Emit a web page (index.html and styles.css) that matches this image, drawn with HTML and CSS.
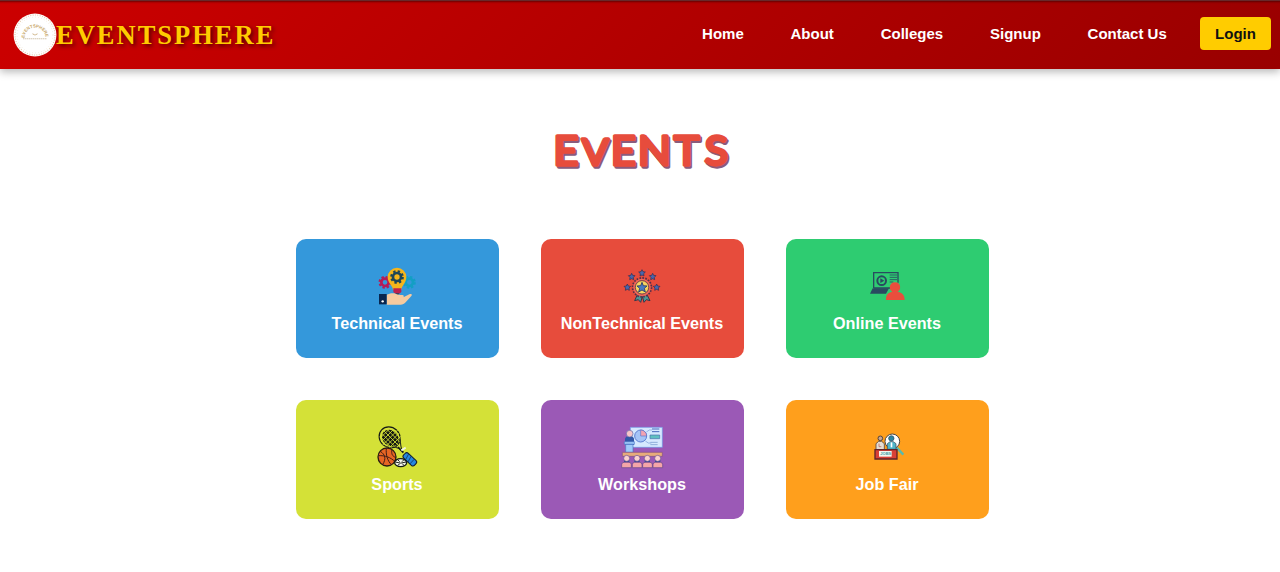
FILE: index.html
```html
<!DOCTYPE html>
<html lang="en">
<head>
<meta charset="utf-8">
<title>EventSphere</title>
<link rel="stylesheet" href="styles.css">
</head>
<body>
<header class="header">
  <div class="brand">
    <svg class="logo" viewBox="0 0 44 44">
      <defs><path id="arc" d="M11.5 25A10.5 10.5 0 0 1 32.5 25"/></defs>
      <circle cx="22" cy="22" r="21.4" fill="#fff"/>
      <circle cx="22" cy="22" r="20" fill="none" stroke="#e3ccb0" stroke-width="1.2" stroke-dasharray="1 1.4"/>
      <circle cx="22" cy="22" r="17.9" fill="none" stroke="#efe2d2" stroke-width=".8" stroke-dasharray=".8 2.2"/>
      <text class="logo-arc"><textPath href="#arc" textLength="32">EVENTSPHERE</textPath></text>
      <path d="M19.5 20.8l2 1h1l2-1" fill="none" stroke="#c9ac7b" stroke-width=".9"/>
      <path d="M10 25.8H34" stroke="#d3c6b0" stroke-width="1.1" stroke-dasharray="1.5 .5"/>
    </svg>
    <span class="brand-name">EVENTSPHERE</span>
  </div>
  <nav class="nav">
    <a>Home</a><a>About</a><a>Colleges</a><a>Signup</a><a>Contact Us</a>
    <a class="login">Login</a>
  </nav>
</header>
<main class="main">
  <h1 class="title">
    <svg class="title-art" viewBox="0 0 190 66">
      <g class="title-shadow" transform="translate(1.5 1.6) scale(1.06 1)"><text y="46.5" x="7.7 35 62 87.5 121.5 150.5">E<tspan class="title-v">V</tspan>ENTS</text></g>
      <g class="title-text" transform="scale(1.06 1)"><text y="46.5" x="7.7 35 62 87.5 121.5 150.5">E<tspan class="title-v">V</tspan>ENTS</text></g>
    </svg>
  </h1>
  <section class="cards">
    <article class="card blue">
      <svg class="icon" viewBox="0 0 162 150">
        <g fill="none" stroke="#b51c57"><circle cx="45" cy="67" r="11" stroke-width="8"/><circle cx="45" cy="67" r="16" stroke-width="7" stroke-dasharray="7 5.57"/></g>
        <g fill="none" stroke="#139fc4"><circle cx="118" cy="67" r="11" stroke-width="8"/><circle cx="118" cy="67" r="16" stroke-width="7" stroke-dasharray="7 5.57"/></g>
        <path d="M69 90c0-13-16-20-16-39a28 28 0 0 1 56 0c0 19-15 26-15 39z" fill="#f5b51b"/>
        <g fill="none" stroke="#1d4658"><circle cx="81" cy="51" r="12" stroke-width="8"/><circle cx="81" cy="51" r="17" stroke-width="7" stroke-dasharray="7 6.35"/></g>
        <path d="M70 85h24v11l-6 5H76l-6-5z" fill="#bd204f"/><path d="M75 100h13l-4 6h-5z" fill="#243c58"/>
        <path d="M50 104l13-4c16-2 15 5 34 5 7 1 5 8-1 9l22-11c6-3 10 0 6 5l-17 19c-4 5-9 7-15 7H50z" fill="#f6ca9f"/>
        <path d="M27 102h23v31H27z" fill="#08264f"/><circle cx="38" cy="124" r="3.5" fill="#fff"/>
      </svg>
      <h2>Technical Events</h2>
    </article>
    <article class="card red">
      <svg class="icon" viewBox="0 0 162 150">
        <defs><path id="star" d="M0-10l3 6 7 1-5 5 1 7-6-3-6 3 1-7-5-5 7-1z"/></defs>
        <g fill="#4767ae" stroke="#302b50" stroke-width="2"><use href="#star" x="81" y="39"/><use href="#star" x="50" y="50"/><use href="#star" x="113" y="50"/><use href="#star" x="37" y="82"/><use href="#star" x="125" y="82"/></g>
        <path d="M68 102l-9 20 11-3 7 8 5-18 5 18 7-8 11 3-10-20z" fill="#4c9696" stroke="#35354a" stroke-width="3"/>
        <circle cx="81" cy="82" r="27" fill="#e94b43"/>
        <circle cx="81" cy="82" r="28" fill="none" stroke="#55304a" stroke-width="6" stroke-dasharray="5 3.8"/>
        <circle cx="81" cy="82" r="24" fill="none" stroke="#ed6b5d" stroke-width="4"/>
        <circle cx="81" cy="82" r="20" fill="#f8d45f" stroke="#58404d" stroke-width="2.5"/>
        <path d="M81 67l4 10 11 1-8 7 3 11-10-6-10 6 3-11-8-7 11-1z" fill="#497bc2" stroke="#273963" stroke-width="2.5"/>
      </svg>
      <h2>NonTechnical Events</h2>
    </article>
    <article class="card green">
      <svg class="icon" viewBox="0 0 162 150">
        <path d="M41 84V38h73v30M92 84H41" fill="none" stroke="#294b60" stroke-width="4"/>
        <circle cx="65" cy="62" r="13" fill="none" stroke="#294b60" stroke-width="6"/><path d="M61 55l12 7-12 7z" fill="#294b60"/>
        <path d="M89 45h22M89 52h22M89 59h22M89 66h11" stroke="#294b60" stroke-width="2.5"/>
        <path d="M38 85h49l-9 16H30z" fill="#294b60"/>
        <path d="M78 120c0-15 5-22 19-25-11-5-11-28 8-28s19 23 8 28c14 3 21 10 21 25z" fill="#e94e3d"/>
      </svg>
      <h2>Online Events</h2>
    </article>
    <article class="card lime">
      <svg class="icon" viewBox="0 0 162 150">
        <path d="M84 78L100 95" stroke="#161b16" stroke-width="5"/>
        <ellipse cx="59" cy="49" rx="33" ry="30" transform="rotate(43 59 49)" fill="none" stroke="#161b16" stroke-width="3.5"/>
        <ellipse cx="61" cy="51" rx="27" ry="23" transform="rotate(43 61 51)" fill="#141812"/>
        <path d="M32 50L58 24M34 62L72 24M38 72L86 24M48 76L90 34M58 80L92 46M30 46L64 80M36 38L78 80M42 30L88 76M52 26L90 64M64 24L92 52" stroke="#d4e137" stroke-width="2.6"/>
        <path d="M90 56c3 13 1 26 9 36M68 78c13 1 23 5 29 14" fill="none" stroke="#161b16" stroke-width="3"/>
        <g transform="rotate(43 117 114)"><rect x="97" y="103" width="45" height="20" rx="7" fill="#2587df" stroke="#101d30" stroke-width="3"/><path d="M106 104l5 19M116 104l5 19M129 104v19" stroke="#173b67" stroke-width="2.5"/></g>
        <path d="M94 88l13-8" stroke="#f1f4df" stroke-width="6"/>
        <circle cx="51" cy="108" r="27" fill="#e76524" stroke="#2c1b12" stroke-width="4"/>
        <path d="M25 104c20-1 37 5 50 18M49 82c-2 18 3 37 15 49M31 91c15 10 18 22 7 40M66 86c-3 12 1 20 12 24" fill="none" stroke="#401e17" stroke-width="3"/>
        <ellipse cx="92" cy="125" rx="18" ry="12" fill="#f5f6ec" stroke="#151a17" stroke-width="4"/><path d="M76 123q16 7 32 0M84 117l5 5M101 117l-5 5M83 133l6-4M97 129l5 4" stroke="#20251e" stroke-width="3" fill="none"/>
      </svg>
      <h2>Sports</h2>
    </article>
    <article class="card purple">
      <svg class="icon" viewBox="0 2 162 150">
        <path d="M46 21h96v60H46z" fill="#d6e9ff" stroke="#6d95e6" stroke-width="2"/>
        <circle cx="77" cy="47" r="18" fill="#a5c4f6" stroke="#5d7ed2" stroke-width="3"/><path d="M77 47V29a18 18 0 0 1 18 18z" fill="#f4a3b1" stroke="#6272c9" stroke-width="2"/>
        <path d="M94 35l9-6h8M91 62l9 6h9" fill="none" stroke="#7598d6" stroke-width="2"/><path d="M111 26h22M111 34h22" stroke="#4768bd" stroke-width="3"/><path d="M105 44h29v11h-29z" fill="#5fbfc0" stroke="#486fae" stroke-width="2"/><path d="M106 66h22M106 73h22" stroke="#8dacd9" stroke-width="3"/>
        <path d="M30 70V54l7-8h13l7 8v20H30z" fill="#3158a8"/><circle cx="44" cy="40" r="10" fill="#f8c5c8" stroke="#5c68a9" stroke-width="2"/>
        <path d="M28 64h30v8H28zM32 72h22v24H32z" fill="#a0cafa" stroke="#4c77c4" stroke-width="2"/>
        <path d="M22 96h120v12H22z" fill="#e7ab7b" stroke="#845280" stroke-width="2"/>
        <g fill="#35509a"><path d="M27 118h16v8H27zM58 118h16v8H58zM89 118h16v8H89zM120 118h16v8h-16z"/></g>
        <g fill="#f5a5a8" stroke="#604389" stroke-width="2"><path d="M20 142v-9q0-7 7-7h15q7 0 7 7v9zM52 142v-9q0-7 7-7h15q7 0 7 7v9zM83 142v-9q0-7 7-7h15q7 0 7 7v9zM114 142v-9q0-7 7-7h15q7 0 7 7v9z"/></g>
        <g fill="#fbd2cf" stroke="#6a4d90" stroke-width="2"><circle cx="35" cy="114" r="9"/><circle cx="66" cy="114" r="9"/><circle cx="97" cy="114" r="9"/><circle cx="128" cy="114" r="9"/></g>
      </svg>
      <h2>Workshops</h2>
    </article>
    <article class="card orange">
      <svg class="icon" viewBox="0 2 162 150">
        <path d="M110 82l20 21" stroke="#58b9af" stroke-width="7"/><circle cx="97" cy="63" r="22" fill="#fff" stroke="#454448" stroke-width="3"/>
        <path d="M82 87V70l8-6h10l8 6v17z" fill="#4fb5c9" stroke="#284457" stroke-width="2"/><circle cx="94" cy="54" r="8" fill="#2c86a0" stroke="#284457" stroke-width="2"/><path d="M92 66h5v15h-5z" fill="#fff"/>
        <path d="M48 88V70l8-7h9l8 7v18z" fill="#e5ddd2" stroke="#54463e" stroke-width="2.5"/><circle cx="61" cy="54" r="7" fill="#c9a58f" stroke="#54443d" stroke-width="3"/><path d="M57 70v9h7" fill="none" stroke="#b4554e" stroke-width="2"/>
        <path d="M45 88h66v28H45z" fill="#d94036" stroke="#5d2529" stroke-width="4"/><path d="M57 92h38v17H57z" fill="#f4f7ef"/><text x="61" y="105" class="jobs">JOBS</text>
      </svg>
      <h2>Job Fair</h2>
    </article>
  </section>
</main>
</body>
</html>
```

FILE: styles.css
```css
* { box-sizing: border-box; }
body { margin: 0; background: #fff; font-family: "Liberation Sans", Arial, sans-serif; }
.header { height: 69px; display: flex; align-items: center; justify-content: space-between; padding: 0 9px 2px 13px; background: linear-gradient(135deg, #c00, #900); border-top: 1px solid #67292b; box-shadow: 0 3px 8px rgba(0,0,0,.28), inset 0 3px 2px -2px rgba(50,0,0,.6); }
.brand { display: flex; align-items: center; padding-top: 1px; }
.logo { width: 44px; height: 44px; margin-right: -1px; }
.logo-arc { font: bold 4.4px "Liberation Sans", sans-serif; fill: #c7a667; }
.brand-name { font: bold 26.5px/30px "Liberation Serif", serif; letter-spacing: 2px; color: #fc0; text-shadow: 2px 2px 4px rgba(0,0,0,.6); }
.nav { display: flex; align-items: center; gap: 46.8px; padding-bottom: 1px; font-size: 15px; font-weight: bold; color: #fff; line-height: 33px; }
.nav .login { width: 71px; height: 33px; margin-left: -13.6px; text-align: center; background: #fc0; color: #111; border-radius: 4px; }
.main { padding-top: 50px; }
.title { width: 190px; height: 66px; margin: 0 auto; }
.title-art { display: block; width: 190px; height: 66px; font-family: Lato, sans-serif; font-size: 41px; font-weight: 400; stroke-width: 3.3; stroke-linejoin: round; }
.title-v { font-size: 37px; }
.title-text { fill: #e74c3c; stroke: #e74c3c; }
.title-shadow { fill: #8a5b7d; stroke: #8a5b7d; }
.cards { display: grid; grid-template-columns: repeat(3, 203px); grid-auto-rows: 118.5px; gap: 42.5px 42px; width: 693px; margin: 54.4px auto 0; transform: translateX(2px); }
.card { display: flex; flex-direction: column; align-items: center; padding-top: 20.5px; border-radius: 10px; color: #fff; }
.card h2 { margin: 3px 0 0; font-size: 16.2px; line-height: 20px; white-space: nowrap; }
.icon { width: 54px; height: 50px; }
.jobs { font: bold 12px "Liberation Sans", sans-serif; fill: #3d9da3; }
.blue { background: #3498db; }
.red { background: #e74c3c; }
.green { background: #2ecc71; }
.lime { background: #d4e137; }
.purple { background: #9b59b6; }
.orange { background: #ff9f1c; }
```
